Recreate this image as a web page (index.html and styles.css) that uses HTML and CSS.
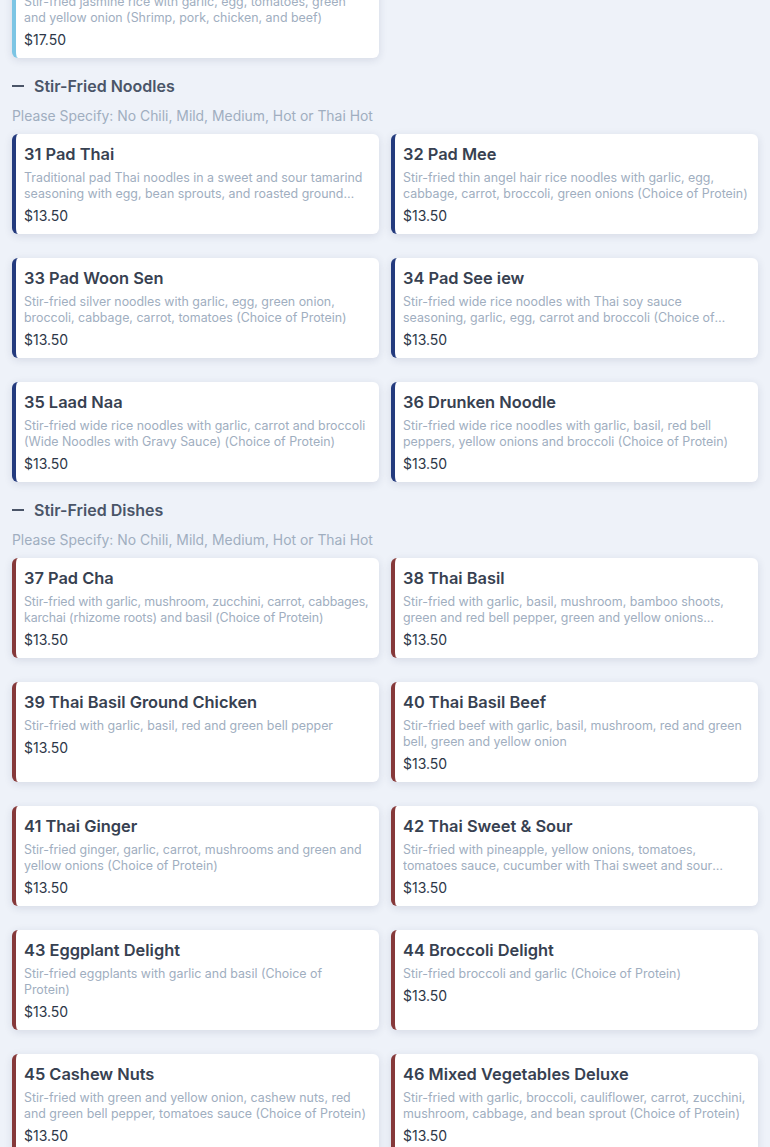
FILE: index.html
```html
<!DOCTYPE html>
<html lang="en">
<head>
<meta charset="utf-8">
<title>Menu</title>
<link rel="stylesheet" href="styles.css">
</head>
<body>
<main class="menu">
  <section class="section">
    <div class="grid">
      <article class="card card-rice">
        <h3 class="title">30 Combination Fried Rice</h3>
        <p class="desc">Stir-fried jasmine rice with garlic, egg, tomatoes, green and yellow onion (Shrimp, pork, chicken, and beef)</p>
        <div class="price">$17.50</div>
      </article>
    </div>
  </section>

  <section class="section">
    <h2 class="section-title"><span class="dash"></span>Stir-Fried Noodles</h2>
    <p class="note">Please Specify: No Chili, Mild, Medium, Hot or Thai Hot</p>
    <div class="grid">
      <article class="card card-noodle">
        <h3 class="title">31 Pad Thai</h3>
        <p class="desc">Traditional pad Thai noodles in a sweet and sour tamarind seasoning with egg, bean sprouts, and roasted ground peanuts (Choice of Protein)</p>
        <div class="price">$13.50</div>
      </article>
      <article class="card card-noodle">
        <h3 class="title">32 Pad Mee</h3>
        <p class="desc">Stir-fried thin angel hair rice noodles with garlic, egg, cabbage, carrot, broccoli, green onions (Choice of Protein)</p>
        <div class="price">$13.50</div>
      </article>
      <article class="card card-noodle">
        <h3 class="title">33 Pad Woon Sen</h3>
        <p class="desc">Stir-fried silver noodles with garlic, egg, green onion, broccoli, cabbage, carrot, tomatoes (Choice of Protein)</p>
        <div class="price">$13.50</div>
      </article>
      <article class="card card-noodle">
        <h3 class="title">34 Pad See iew</h3>
        <p class="desc">Stir-fried wide rice noodles with Thai soy sauce seasoning, garlic, egg, carrot and broccoli (Choice of Protein)</p>
        <div class="price">$13.50</div>
      </article>
      <article class="card card-noodle">
        <h3 class="title">35 Laad Naa</h3>
        <p class="desc">Stir-fried wide rice noodles with garlic, carrot and broccoli (Wide Noodles with Gravy Sauce) (Choice of Protein)</p>
        <div class="price">$13.50</div>
      </article>
      <article class="card card-noodle">
        <h3 class="title">36 Drunken Noodle</h3>
        <p class="desc">Stir-fried wide rice noodles with garlic, basil, red bell peppers, yellow onions and broccoli (Choice of Protein)</p>
        <div class="price">$13.50</div>
      </article>
    </div>
  </section>

  <section class="section">
    <h2 class="section-title"><span class="dash"></span>Stir-Fried Dishes</h2>
    <p class="note">Please Specify: No Chili, Mild, Medium, Hot or Thai Hot</p>
    <div class="grid">
      <article class="card card-dish">
        <h3 class="title">37 Pad Cha</h3>
        <p class="desc desc-tight">Stir-fried with garlic, mushroom, zucchini, carrot, cabbages, karchai (rhizome roots) and basil (Choice of Protein)</p>
        <div class="price">$13.50</div>
      </article>
      <article class="card card-dish">
        <h3 class="title">38 Thai Basil</h3>
        <p class="desc">Stir-fried with garlic, basil, mushroom, bamboo shoots, green and red bell pepper, green and yellow onions (Choice of Protein)</p>
        <div class="price">$13.50</div>
      </article>
      <article class="card card-dish">
        <h3 class="title">39 Thai Basil Ground Chicken</h3>
        <p class="desc">Stir-fried with garlic, basil, red and green bell pepper</p>
        <div class="price">$13.50</div>
      </article>
      <article class="card card-dish">
        <h3 class="title">40 Thai Basil Beef</h3>
        <p class="desc">Stir-fried beef with garlic, basil, mushroom, red and green bell, green and yellow onion</p>
        <div class="price">$13.50</div>
      </article>
      <article class="card card-dish">
        <h3 class="title">41 Thai Ginger</h3>
        <p class="desc">Stir-fried ginger, garlic, carrot, mushrooms and green and yellow onions (Choice of Protein)</p>
        <div class="price">$13.50</div>
      </article>
      <article class="card card-dish">
        <h3 class="title">42 Thai Sweet &amp; Sour</h3>
        <p class="desc">Stir-fried with pineapple, yellow onions, tomatoes, tomatoes sauce, cucumber with Thai sweet and sour sauce (Choice of Protein)</p>
        <div class="price">$13.50</div>
      </article>
      <article class="card card-dish">
        <h3 class="title">43 Eggplant Delight</h3>
        <p class="desc">Stir-fried eggplants with garlic and basil (Choice of Protein)</p>
        <div class="price">$13.50</div>
      </article>
      <article class="card card-dish">
        <h3 class="title">44 Broccoli Delight</h3>
        <p class="desc">Stir-fried broccoli and garlic (Choice of Protein)</p>
        <div class="price">$13.50</div>
      </article>
      <article class="card card-dish">
        <h3 class="title">45 Cashew Nuts</h3>
        <p class="desc">Stir-fried with green and yellow onion, cashew nuts, red and green bell pepper, tomatoes sauce (Choice of Protein)</p>
        <div class="price">$13.50</div>
      </article>
      <article class="card card-dish">
        <h3 class="title">46 Mixed Vegetables Deluxe</h3>
        <p class="desc">Stir-fried with garlic, broccoli, cauliflower, carrot, zucchini, mushroom, cabbage, and bean sprout (Choice of Protein)</p>
        <div class="price">$13.50</div>
      </article>
    </div>
  </section>
</main>
</body>
</html>
```
FILE: styles.css
```css
html, body {
  margin: 0;
  padding: 0;
}
body {
  background: #eef2f9;
  font-family: Inter, "Noto Sans", "Liberation Sans", sans-serif;
  color: #2d3748;
  overflow: hidden;
}
.menu {
  margin-top: -42px;
  padding: 0 12px 40px;
}
.section + .section {
  margin-top: 16px;
}
.section-title {
  display: flex;
  align-items: center;
  gap: 10px;
  margin: 0;
  font-size: 16px;
  line-height: 24px;
  font-weight: 600;
  color: #4a5568;
}
.dash {
  display: block;
  width: 12px;
  height: 2px;
  background: #4a5568;
}
.note {
  margin: 8px 0 8px;
  font-size: 13.9px;
  line-height: 20px;
  color: #a0aec0;
}
.grid {
  display: grid;
  grid-template-columns: 1fr 1fr;
  column-gap: 12px;
  row-gap: 24px;
}
.card {
  background: #ffffff;
  border-left: 4px solid #1e3a8a;
  border-radius: 6px;
  box-shadow: 0 2px 8px rgba(30, 41, 80, 0.12);
  padding: 8px 9.8px 8px 8px;
  min-height: 84px;
}
.card-rice { border-left-color: #7cc5e4; }
.card-noodle { border-left-color: #243b7e; }
.card-dish { border-left-color: #86393a; }
.title {
  margin: 0;
  font-size: 16.4px;
  line-height: 24px;
  font-weight: 600;
  color: #374151;
}
.desc {
  margin: 4px 0 0;
  font-size: 12.4px;
  line-height: 16px;
  color: #a0aec0;
  display: -webkit-box;
  -webkit-line-clamp: 2;
  -webkit-box-orient: vertical;
  overflow: hidden;
}
.desc-tight {
  letter-spacing: -0.12px;
}
.price {
  margin-top: 4px;
  font-size: 14px;
  line-height: 20px;
  font-weight: 400;
  color: #2d3748;
}
```
